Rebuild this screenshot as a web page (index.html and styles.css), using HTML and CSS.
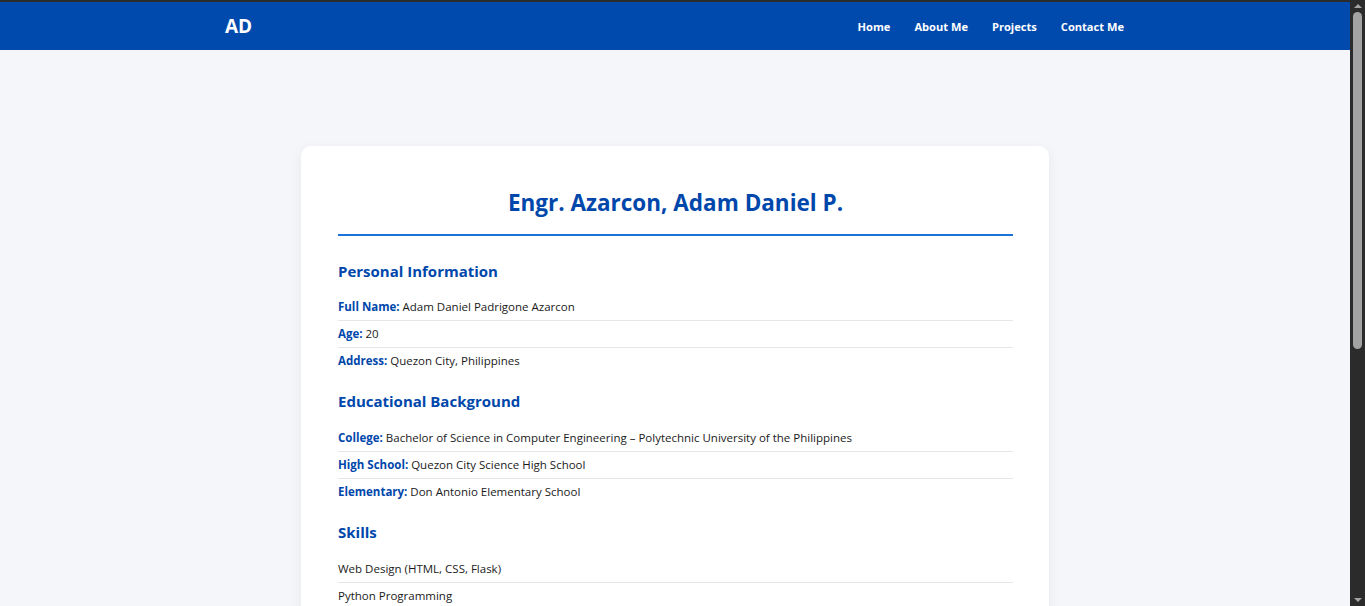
FILE: index.html
```html
<!DOCTYPE html>
<html lang="en">
<head>
<meta charset="utf-8">
<title>About Me</title>
<link rel="stylesheet" href="styles.css">
</head>
<body>
<header class="site-header">
  <div class="nav-inner">
    <div class="logo">AD</div>
    <nav>
      <ul class="nav-links">
        <li><a href="#">Home</a></li>
        <li><a href="#">About Me</a></li>
        <li><a href="#">Projects</a></li>
        <li><a href="#">Contact Me</a></li>
      </ul>
    </nav>
  </div>
</header>
<main class="page">
  <section class="card">
    <h1 class="title">Engr. Azarcon, Adam Daniel P.</h1>

    <section class="section first">
      <h2 class="section-title">Personal Information</h2>
      <ul class="info">
        <li><span class="label">Full Name:</span> Adam Daniel Padrigone Azarcon</li>
        <li><span class="label">Age:</span> 20</li>
        <li><span class="label">Address:</span> Quezon City, Philippines</li>
      </ul>
    </section>

    <section class="section">
      <h2 class="section-title">Educational Background</h2>
      <ul class="info">
        <li><span class="label">College:</span> Bachelor of Science in Computer Engineering – Polytechnic University of the Philippines</li>
        <li><span class="label">High School:</span> Quezon City Science High School</li>
        <li><span class="label">Elementary:</span> Don Antonio Elementary School</li>
      </ul>
    </section>

    <section class="section">
      <h2 class="section-title">Skills</h2>
      <ul class="info">
        <li>Web Design (HTML, CSS, Flask)</li>
        <li>Python Programming</li>
        <li>C++ Programming</li>
        <li>Circuit Design</li>
      </ul>
    </section>
  </section>
</main>
<div class="scrollbar" aria-hidden="true">
  <span class="sb-arrow up"></span>
  <span class="sb-thumb"></span>
  <span class="sb-arrow down"></span>
</div>
</body>
</html>
```

FILE: styles.css
```css
* {
  box-sizing: border-box;
}
html {
  scrollbar-width: none;
}
html::-webkit-scrollbar {
  display: none;
}
body {
  margin: 0;
  padding-right: 15px;
  background: #f4f6fa;
  color: #1a1a1a;
  font-family: "Open Sans", "Noto Sans", sans-serif;
}
.site-header {
  background: #004aad;
  border-top: 2px solid #2b2b2b;
  height: 50px;
}
.nav-inner {
  width: 900px;
  margin: 0 auto;
  height: 100%;
  display: flex;
  align-items: center;
  justify-content: space-between;
}
.logo {
  color: #ffffff;
  font-weight: 700;
  font-size: 19px;
  margin-top: -1px;
}
.nav-links {
  list-style: none;
  margin: -2px 1px 0 0;
  padding: 0;
  display: flex;
  gap: 24px;
}
.nav-links a {
  color: #ffffff;
  text-decoration: none;
  font-weight: 700;
  font-size: 11.1px;
}
.page {
  padding: 96px 0 40px;
  display: flex;
  justify-content: center;
}
.card {
  width: 748px;
  background: #ffffff;
  border-radius: 10px;
  box-shadow: 0 4px 14px rgba(0, 0, 0, 0.06);
  padding: 40px 36px 40px 37px;
}
.title {
  margin: 0;
  text-align: center;
  color: #0047ab;
  font-size: 22.5px;
  font-weight: 700;
  line-height: 33px;
  padding-bottom: 15px;
  border-bottom: 2px solid #1a73d9;
}
.section {
  margin-top: 16px;
}
.section.first {
  margin-top: 24px;
}
.section-title {
  margin: 0 0 13px;
  color: #0047ab;
  font-size: 15px;
  font-weight: 700;
  line-height: 22px;
}
.section.first .section-title {
  margin-bottom: 12px;
}
.info {
  list-style: none;
  margin: 0;
  padding: 0;
}
.info li {
  font-size: 11.5px;
  line-height: 16px;
  padding: 5px 0;
  border-bottom: 1px solid #e6e6e6;
}
.info li:last-child {
  border-bottom: none;
}
.label {
  color: #0047ab;
  font-weight: 700;
}
.scrollbar {
  position: fixed;
  top: 0;
  right: 0;
  width: 15px;
  height: 100%;
  background: #2b2b2b;
  display: flex;
  flex-direction: column;
  align-items: center;
}
.sb-arrow {
  width: 0;
  height: 0;
  border-left: 4px solid transparent;
  border-right: 4px solid transparent;
}
.sb-arrow.up {
  margin-top: 4px;
  border-bottom: 4px solid #a3a3a3;
}
.sb-arrow.down {
  margin-top: auto;
  margin-bottom: 4px;
  border-top: 4px solid #a3a3a3;
}
.sb-thumb {
  width: 9px;
  height: 337px;
  margin-top: 4px;
  border-radius: 5px;
  background: #a3a3a3;
}
```
